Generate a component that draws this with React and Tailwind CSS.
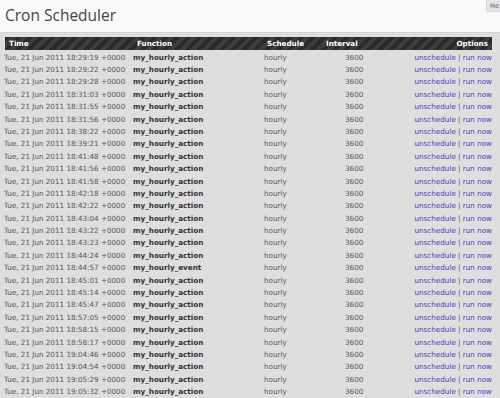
const rows = [
  ['18:29:19', 'my_hourly_action'],
  ['18:29:22', 'my_hourly_action'],
  ['18:29:28', 'my_hourly_action'],
  ['18:31:03', 'my_hourly_action'],
  ['18:31:55', 'my_hourly_action'],
  ['18:31:56', 'my_hourly_action'],
  ['18:38:22', 'my_hourly_action'],
  ['18:39:21', 'my_hourly_action'],
  ['18:41:48', 'my_hourly_action'],
  ['18:41:56', 'my_hourly_action'],
  ['18:41:58', 'my_hourly_action'],
  ['18:42:18', 'my_hourly_action'],
  ['18:42:22', 'my_hourly_action'],
  ['18:43:04', 'my_hourly_action'],
  ['18:43:22', 'my_hourly_action'],
  ['18:43:23', 'my_hourly_action'],
  ['18:44:24', 'my_hourly_action'],
  ['18:44:57', 'my_hourly_event'],
  ['18:45:01', 'my_hourly_action'],
  ['18:45:14', 'my_hourly_action'],
  ['18:45:47', 'my_hourly_action'],
  ['18:57:05', 'my_hourly_action'],
  ['18:58:15', 'my_hourly_action'],
  ['18:58:17', 'my_hourly_action'],
  ['19:04:46', 'my_hourly_action'],
  ['19:04:54', 'my_hourly_action'],
  ['19:05:29', 'my_hourly_action'],
  ['19:05:32', 'my_hourly_action'],
];

const CronRow = ({ time, hook }) => (
  <div className="grid grid-cols-[129px_131px_81px_1fr_auto] items-center h-[12.4px] pl-[4px] pr-[8px] leading-none">
    <span className="text-[#555]">Tue, 21 Jun 2011 {time} +0000</span>
    <span className="font-bold text-[#333]">{hook}</span>
    <span className="text-[#555]">hourly</span>
    <span className="text-[#555]">3600</span>
    <span>
      <a className="text-[#4a3cb8]">unschedule</a>
      <span className="text-[#555]"> | </span>
      <a className="text-[#4a3cb8]">run now</a>
    </span>
  </div>
);

export default function App() {
  return (
    <div className="relative w-[500px] h-[398px] overflow-hidden bg-[#f9f9f9] font-['DejaVu_Sans',Verdana,sans-serif] text-[7.2px]">
      {/* help tab, mostly off screen */}
      <div className="absolute top-0 left-[486px] h-[12px] w-[24px] bg-[#e4e4e4] border border-t-0 border-[#d4d4d4] rounded-bl-[3px] pl-[3px] pt-[1px] text-[6.5px] text-[#555] leading-[10px]">
        He
      </div>

      <h2 className="pl-[5px] pt-[5px] h-[32px] font-['Open_Sans',sans-serif] text-[15.5px] leading-[20px] text-[#464646]">
        Cron Scheduler
      </h2>

      <div className="h-full bg-[#dedede] border-t border-[#d2d2d2] pt-[4px]">
        <div className="ml-[5px] w-[487px] h-[13px] grid grid-cols-[128px_130px_59px_1fr_auto] items-center pl-[4px] pr-[4px] font-bold text-white leading-none bg-[repeating-linear-gradient(135deg,#2a2a2a_0px,#2a2a2a_4px,#3d3d3d_4px,#3d3d3d_8px)]">
          <span>Time</span>
          <span>Function</span>
          <span>Schedule</span>
          <span>Interval</span>
          <span>Options</span>
        </div>
        <div className="pt-[1px]">
          {rows.map(([time, hook]) => (
            <CronRow key={time} time={time} hook={hook} />
          ))}
        </div>
      </div>
    </div>
  );
}
